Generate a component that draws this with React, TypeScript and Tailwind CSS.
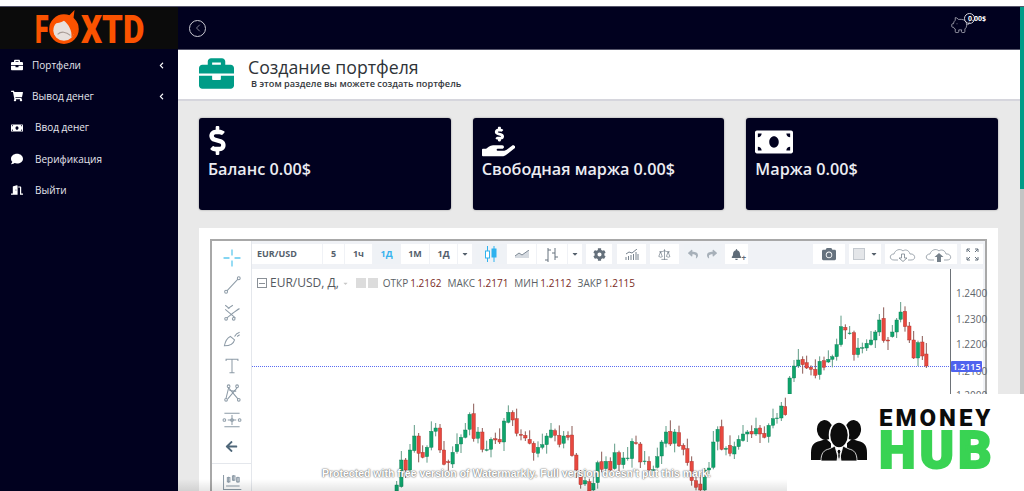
import type { ReactNode } from "react";
import {
  FaBriefcase,
  FaShoppingCart,
  FaMoneyBill,
  FaComment,
  FaDoorOpen,
  FaChevronLeft,
  FaDollarSign,
  FaHandHoldingUsd,
  FaCog,
  FaReply,
  FaShare,
  FaBell,
  FaCamera,
  FaArrowLeft,
  FaCaretDown,
} from "react-icons/fa";
import { ChevronLeft, PiggyBank, Scale } from "lucide-react";

// [x, top, bottom, colour] measured on the 3x crops of the picture
type Candle = [number, number, number, "g" | "r"];

const left: Candle[] = [
  [590, 765, 783, "g"], [604, 690, 770, "g"], [617, 690, 720, "r"], [630, 660, 720, "g"], [643, 618, 662, "g"],
  [656, 618, 670, "r"], [668, 667, 682, "r"], [681, 652, 680, "g"], [694, 604, 652, "g"], [707, 594, 604, "g"],
  [720, 594, 660, "r"], [732, 660, 703, "r"], [745, 695, 698, "r"], [758, 667, 702, "g"], [771, 643, 665, "g"],
  [783, 622, 642, "g"], [796, 600, 622, "g"], [809, 553, 598, "g"], [821, 551, 626, "r"], [834, 606, 625, "g"],
  [847, 606, 658, "r"], [860, 659, 661, "g"], [873, 628, 658, "g"], [886, 626, 630, "r"], [899, 628, 636, "r"],
  [912, 573, 636, "g"], [925, 547, 577, "g"], [938, 547, 570, "r"], [950, 566, 610, "r"], [963, 613, 616, "r"],
  [976, 616, 624, "r"], [989, 628, 640, "r"], [1001, 640, 668, "r"], [1014, 652, 670, "g"], [1027, 644, 652, "g"],
  [1040, 618, 644, "g"], [1053, 600, 622, "g"], [1065, 602, 616, "r"], [1078, 616, 643, "r"], [1091, 618, 640, "g"],
  [1104, 616, 622, "r"], [1116, 615, 677, "r"], [1129, 675, 720, "r"], [1142, 738, 764, "r"], [1155, 752, 762, "g"],
  [1168, 755, 783, "r"], [1180, 760, 780, "g"],
];

const right: Candle[] = [
  [-7, 698, 758, "g"], [5, 695, 718, "r"], [18, 694, 716, "g"], [31, 694, 720, "r"], [44, 668, 716, "g"],
  [57, 668, 704, "r"], [70, 684, 704, "g"], [83, 684, 686, "g"], [96, 634, 686, "g"], [108, 638, 641, "r"],
  [121, 642, 696, "r"], [134, 693, 695, "g"], [147, 694, 720, "r"], [160, 719, 721, "g"], [172, 680, 712, "g"],
  [185, 636, 678, "g"], [198, 606, 640, "g"], [211, 604, 642, "r"], [224, 606, 640, "g"], [237, 608, 648, "r"],
  [250, 646, 658, "r"], [262, 656, 698, "r"], [275, 694, 752, "r"], [288, 752, 772, "r"], [301, 762, 780, "r"],
  [314, 720, 780, "g"], [327, 714, 720, "g"], [340, 636, 712, "g"], [353, 598, 634, "g"], [365, 590, 658, "r"],
  [378, 655, 658, "g"], [390, 646, 670, "r"], [403, 650, 672, "g"], [416, 628, 650, "g"], [429, 612, 632, "g"],
  [442, 606, 612, "g"], [455, 604, 612, "r"], [468, 596, 612, "g"], [480, 594, 612, "r"], [493, 610, 622, "r"],
  [506, 586, 620, "g"], [519, 566, 586, "g"], [531, 564, 566, "g"], [544, 528, 564, "g"], [556, 530, 554, "r"],
  [569, 444, 492, "g"], [582, 408, 444, "g"], [595, 390, 408, "g"], [608, 388, 404, "r"], [620, 398, 414, "r"],
  [633, 412, 418, "r"], [646, 418, 436, "r"], [659, 394, 434, "g"], [672, 392, 412, "r"], [685, 388, 396, "g"],
  [697, 380, 388, "g"], [710, 344, 380, "g"], [723, 290, 344, "g"], [736, 292, 300, "r"], [749, 309, 311, "g"],
  [762, 308, 374, "r"], [774, 354, 374, "g"], [787, 353, 355, "g"], [800, 340, 354, "g"], [813, 330, 344, "g"],
  [826, 306, 330, "g"], [838, 270, 306, "g"], [851, 265, 332, "r"], [864, 330, 333, "r"], [877, 306, 320, "g"],
  [890, 270, 306, "g"], [902, 246, 268, "g"], [915, 244, 290, "r"], [928, 288, 330, "r"], [941, 330, 384, "r"],
  [954, 338, 384, "g"], [967, 336, 378, "r"], [979, 372, 408, "r"],
];

const wickUp = [4, 9, 2, 6, 11, 3, 7, 2, 10, 5];
const wickDown = [3, 1, 8, 4, 2, 9, 1, 6, 3, 5];

const candles = [
  ...left.map(([x, t, b, c]) => ({ x: 200 + x / 3, t: 230 + t / 3, b: 230 + b / 3, c })),
  ...right.map(([x, t, b, c]) => ({ x: 600 + x / 3, t: 230 + t / 3, b: 230 + b / 3, c })),
];

function Chart() {
  return (
    <svg className="absolute left-0 top-0" width="698" height="222" viewBox="252 269 698 222">
      <line x1="252" y1="366.5" x2="950" y2="366.5" stroke="#5a6cf2" strokeWidth="1" strokeDasharray="1 1" />
      {candles.map((k, i) => (
        <g key={i}>
          <line
            x1={k.x}
            x2={k.x}
            y1={k.t - wickUp[i % 10]}
            y2={k.b + wickDown[i % 10]}
            stroke={k.c === "g" ? "#5f9c86" : "#8b5a55"}
            strokeWidth="1"
          />
          <rect
            x={k.x - 1.7}
            y={k.t}
            width="3.4"
            height={k.b - k.t}
            fill={k.c === "g" ? "#0fa46c" : "#e8483f"}
            stroke={k.c === "g" ? "#0a7a50" : "#a8302a"}
            strokeWidth="0.4"
          />
        </g>
      ))}
    </svg>
  );
}

function NavItem({ icon, label, pad, arrow }: { icon: ReactNode; label: string; pad: string; arrow?: boolean }) {
  return (
    <div className="flex h-[31.3px] items-center pl-[10px] pr-[13px] text-[10px] font-medium text-[#e6e6ee]">
      <span className={`flex w-[14px] justify-center text-[12px] text-white ${pad}`}>{icon}</span>
      <span className="flex-1">{label}</span>
      {arrow && <FaChevronLeft className="text-[7px] text-white" />}
    </div>
  );
}

function StatCard({ icon, text }: { icon: ReactNode; text: string }) {
  return (
    <div className="h-[92px] rounded-[3px] bg-[#01011f] pl-[9px] pt-[7px] text-white shadow-[0_0_2px_rgba(0,0,0,0.4)]">
      <div className="flex h-[30px] items-center">{icon}</div>
      <div className="mt-[2px] text-[16.2px] font-semibold text-[#ececf2]">{text}</div>
    </div>
  );
}

function ToolBtn({ w, active, children }: { w: string; active?: boolean; children: ReactNode }) {
  return (
    <div
      className={`flex h-[20px] shrink-0 items-center justify-center text-[9px] font-bold ${w} ${
        active ? "bg-[#eff2f6]" : "bg-white"
      }`}
    >
      {children}
    </div>
  );
}

function Stroke({ children, color = "#8c9aa6" }: { children: ReactNode; color?: string }) {
  return (
    <svg width="22" height="22" viewBox="0 0 26 26" fill="none" stroke={color} strokeWidth="1.2">
      {children}
    </svg>
  );
}

function SideTools() {
  return (
    <div className="flex w-[39px] shrink-0 flex-col items-center bg-white pt-[3px]">
      <div className="flex h-[27px] items-center">
        <Stroke color="#5cc8ee">
          <path d="M13 3v7M13 16v7M3 13h7M16 13h7" strokeWidth="1.5" />
        </Stroke>
      </div>
      <div className="flex h-[27px] items-center">
        <Stroke>
          <circle cx="6" cy="21" r="1.7" />
          <circle cx="21" cy="5" r="1.7" />
          <path d="M7 20 20 6" />
        </Stroke>
      </div>
      <div className="flex h-[27px] items-center">
        <Stroke>
          <circle cx="6" cy="21" r="1.6" />
          <circle cx="15" cy="21" r="1.6" />
          <path d="M7 20 21 9M5 10l12 10M5 5l5 4M13 15l9-6M8 9l6-4" />
        </Stroke>
      </div>
      <div className="flex h-[27px] items-center">
        <Stroke>
          <path d="M4 21c1-5 3-9 7-11l5 4c-1 4-5 7-12 7ZM16 10c1-2 3-4 6-5M19 10l3-2" />
        </Stroke>
      </div>
      <div className="flex h-[27px] items-center">
        <Stroke>
          <path d="M6 7V5h14v2M13 5v16M10 21h6" />
        </Stroke>
      </div>
      <div className="flex h-[27px] items-center">
        <Stroke>
          <circle cx="6" cy="21" r="1.6" />
          <circle cx="9" cy="5" r="1.6" />
          <circle cx="19" cy="5" r="1.6" />
          <circle cx="21" cy="21" r="1.6" />
          <path d="M6 19 9 7M9 7l11 13M19 7 8 20M10 10l8 1" />
        </Stroke>
      </div>
      <div className="flex h-[27px] items-center">
        <Stroke>
          <path d="M4 5h18M8 13h10M4 21h18M13 7v12" />
          <circle cx="4" cy="13" r="1.6" />
          <circle cx="22" cy="13" r="1.6" />
          <circle cx="13" cy="13" r="1.6" />
        </Stroke>
      </div>
      <div className="flex h-[27px] items-center text-[13px] text-[#4f6779]">
        <FaArrowLeft />
      </div>
      <div className="mt-[3px] h-px w-full bg-[#e4e7ec]" />
      <div className="mt-[3px] flex h-[27px] items-center">
        <Stroke>
          <path d="M3 6v17h21M6 19h16M9 8v7M15 6v7M20 8v7" />
          <rect x="7.5" y="9" width="3" height="5" />
          <rect x="13.5" y="7" width="3" height="5" />
          <rect x="18.5" y="9" width="3" height="5" />
        </Stroke>
      </div>
    </div>
  );
}

function CloudIcon({ arrow, filled }: { arrow: string; filled?: boolean }) {
  return (
    <svg width="28" height="15" viewBox="0 0 28 15" fill="none" stroke="#8a949e" strokeWidth="0.8">
      <path d="M9 13H5c-5 0-5-6 0-6 1-4 6-6 9-3 2-2 6-1 7 3 5-1 7 6 1 6h-3" />
      <path d={arrow} fill={filled ? "#76818b" : "#fff"} stroke={filled ? "none" : "#76818b"} />
    </svg>
  );
}

function TopTools() {
  return (
    <div className="flex h-[28px] items-start gap-[4px] bg-[#f0f2f6] pt-[3px] text-[#54606c]">
      <div className="flex gap-px">
        <ToolBtn w="w-[70px] !justify-start pl-[5px]">EUR/USD</ToolBtn>
        <ToolBtn w="w-[21px]">5</ToolBtn>
        <ToolBtn w="w-[27px]">1ч</ToolBtn>
        <ToolBtn w="w-[27px] text-[#38b3ee]" active>1Д</ToolBtn>
        <ToolBtn w="w-[28px]">1М</ToolBtn>
        <ToolBtn w="w-[27px]">1Д</ToolBtn>
        <ToolBtn w="w-[14px]"><FaCaretDown className="text-[8px]" /></ToolBtn>
      </div>
      <div className="flex gap-px">
        <ToolBtn w="w-[30px]" active>
          <svg width="14" height="16" viewBox="0 0 14 16" fill="none" stroke="#2fb2ee">
            <path d="M3.5 0v16M10 0v16" />
            <rect x="1.5" y="5" width="4" height="7" fill="#fff" />
            <rect x="8" y="3" width="4" height="8" fill="#2fb2ee" />
          </svg>
        </ToolBtn>
        <ToolBtn w="w-[29px]">
          <svg width="14" height="8" viewBox="0 0 14 8">
            <path d="M0 8V6l4-3 3 2 7-5v8Z" fill="#d5dae0" />
            <path d="M0 6l4-3 3 2 7-5" fill="none" stroke="#7f8a95" />
          </svg>
        </ToolBtn>
        <ToolBtn w="w-[30px]">
          <svg width="16" height="15" viewBox="0 0 16 15" fill="none" stroke="#66727e">
            <path d="M4 1v14M1 13h3M4 3h3M11 1v12M8 6h3M11 10h3" />
          </svg>
        </ToolBtn>
        <ToolBtn w="w-[14px]"><FaCaretDown className="text-[8px]" /></ToolBtn>
      </div>
      <ToolBtn w="w-[26px]"><FaCog className="text-[13px] text-[#65707b]" /></ToolBtn>
      <ToolBtn w="w-[29px] ml-px">
        <svg width="14" height="11" viewBox="0 0 14 11" fill="none" stroke="#79848f">
          <path d="M1 11V8M3.5 11V7M6 11V6M8.5 11V5M11 11V3M13 11V5M1 5l3-2 3 1 5-4" />
        </svg>
      </ToolBtn>
      <ToolBtn w="w-[29px]"><Scale size={13} strokeWidth={1.2} color="#66727e" /></ToolBtn>
      <div className="ml-px flex gap-px">
        <ToolBtn w="w-[18px]" active><FaReply className="text-[10px] text-[#a7b0b9]" /></ToolBtn>
        <ToolBtn w="w-[18px]" active><FaShare className="text-[10px] text-[#a7b0b9]" /></ToolBtn>
      </div>
      <ToolBtn w="w-[23px]">
        <span className="relative">
          <FaBell className="text-[11px] text-[#5f6c78]" />
          <span className="absolute -bottom-[2px] -right-[4px] text-[8px] leading-none text-[#5f6c78]">+</span>
        </span>
      </ToolBtn>
      <div className="flex-1" />
      <ToolBtn w="w-[32px]"><FaCamera className="text-[14px] text-[#66727e]" /></ToolBtn>
      <ToolBtn w="w-[32px] gap-[5px]">
        <span className="h-[12px] w-[12px] border border-[#c4c9cf] bg-[#e4e6e9]" />
        <FaCaretDown className="text-[8px] text-[#55606b]" />
      </ToolBtn>
      <div className="flex">
        <ToolBtn w="w-[36px]"><CloudIcon arrow="M12.5 7h3v4h2.5l-4 3.5-4-3.5h2.5Z" /></ToolBtn>
        <ToolBtn w="w-[36px]"><CloudIcon arrow="M14 6l4.5 4H16v5h-4v-5H9.5Z" filled /></ToolBtn>
      </div>
      <ToolBtn w="w-[22px] mr-[2px]">
        <svg width="13" height="13" viewBox="0 0 13 13" fill="none" stroke="#66727e">
          <path d="M1 4V1h3M1 1l3 3M9 1h3v3M12 1 9 4M1 9v3h3M1 12l3-3M12 9v3H9M12 12 9 9" />
        </svg>
      </ToolBtn>
    </div>
  );
}

function Ohlc({ name, value }: { name: string; value: string }) {
  return (
    <span className="flex gap-[2px]">
      <span className="text-[#5a5f66]">{name}</span>
      <span className="text-[#7a2b24]">{value}</span>
    </span>
  );
}

function ChartPane() {
  return (
    <div className="flex h-[240px] bg-[#f0f2f6] pr-[2px]">
      <div className="relative flex-1 bg-white">
        <Chart />
        <div className="relative flex h-[28px] items-center pl-[5px] text-[10px] font-medium">
          <span className="flex h-[10px] w-[10px] items-center justify-center border border-[#8a9097]">
            <span className="h-px w-[6px] bg-[#8a9097]" />
          </span>
          <span className="ml-[3px] text-[12px] text-[#55595f]">EUR/USD, Д,</span>
          <FaCaretDown className="ml-[3px] text-[7px] text-[#c8c8c8]" />
          <span className="ml-[7px] h-[10px] w-[10px] bg-[#dcdcdc]" />
          <span className="ml-[2px] h-[10px] w-[10px] bg-[#dcdcdc]" />
          <span className="ml-[5px] flex gap-[6px]">
            <Ohlc name="ОТКР" value="1.2162" />
            <Ohlc name="МАКС" value="1.2171" />
            <Ohlc name="МИН" value="1.2112" />
            <Ohlc name="ЗАКР" value="1.2115" />
          </span>
        </div>
      </div>
      <div className="relative w-[33px] shrink-0 border-l border-[#6d7278] bg-white text-[10px] text-[#5f666d]">
        <span className="absolute left-[5px] top-[17px]">1.2400</span>
        <span className="absolute left-[5px] top-[43px]">1.2300</span>
        <span className="absolute left-[5px] top-[68px]">1.2200</span>
        <span className="absolute left-[5px] top-[95px]">1.2100</span>
        <span className="absolute left-[5px] top-[119px]">1.2000</span>
        <span className="absolute left-0 top-[92px] flex h-[11px] w-[31px] items-center justify-center rounded-[1px] bg-[#4f63ee] text-[9px] font-semibold text-white">
          1.2115
        </span>
      </div>
    </div>
  );
}

function People() {
  return (
    <svg width="56" height="41" viewBox="0 0 56 41" fill="#0c0c0c" className="mt-[3px]">
      <ellipse cx="14" cy="10" rx="8" ry="10" transform="rotate(-10 14 10)" />
      <ellipse cx="42" cy="10" rx="8" ry="10" transform="rotate(10 42 10)" />
      <path d="M0 33c0-8 3-11 9-12l6-2 5 4v17H0ZM56 33c0-8-3-11-9-12l-6-2-5 4v17h20Z" />
      <ellipse cx="28" cy="15" rx="9.5" ry="13" stroke="#fff" strokeWidth="1.5" />
      <path d="M10 41c0-8 3-11 8-12l6-3 4 15 4-15 6 3c5 1 8 4 8 12H30l-1-7 1-3-2-2-2 2 1 3-1 7Z" stroke="#fff" strokeWidth="0.8" />
    </svg>
  );
}

function Logo() {
  return (
    <div className="flex h-[42px] items-center bg-[#0b0b0b] pl-[35px] pt-[3px] font-['Roboto',sans-serif] text-[38px] font-black leading-none text-[#fb5200]">
      <span className="inline-block w-[14px] origin-left scale-x-[0.65]">F</span>
      <svg width="32" height="36" viewBox="0 0 30 34" className="-mt-[6px] shrink-0">
        <circle cx="14" cy="19" r="14" fill="#fb5200" />
        <circle cx="14" cy="20" r="10" fill="#e7e0dc" />
        <path d="M4 14c4-6 10-8 14-7l6-6-1 8c4 6 3 13-2 18 1-7-3-13-7-16-3 2-6 2-10 3Z" fill="#fb5200" />
        <path d="M8 24c3-3 8-3 12 1" stroke="#a89c96" fill="none" />
      </svg>
      <span className="inline-block w-[62px] origin-left scale-x-[0.87] whitespace-nowrap">XTD</span>
    </div>
  );
}

export default function App() {
  return (
    <div className="relative flex h-[491px] w-[1024px] flex-col overflow-hidden bg-white font-['Open_Sans',sans-serif]">
      <div className="h-[6px] shrink-0 bg-white" />
      <div className="flex min-h-0 flex-1 border-t border-[#55556a]">
        <aside className="w-[178px] shrink-0 bg-[#01011f]">
          <Logo />
          <nav className="pt-[0.5px]">
            <NavItem icon={<FaBriefcase />} label="Портфели" pad="mr-[8px]" arrow />
            <NavItem icon={<FaShoppingCart />} label="Вывод денег" pad="mr-[8px]" arrow />
            <NavItem icon={<FaMoneyBill />} label="Ввод денег" pad="mr-[11px]" />
            <NavItem icon={<FaComment />} label="Верификация" pad="mr-[11px]" />
            <NavItem icon={<FaDoorOpen />} label="Выйти" pad="mr-[11px]" />
          </nav>
        </aside>
        <main className="flex min-w-0 flex-1 flex-col">
          <header className="flex h-[43px] shrink-0 items-center justify-between border-b border-[#55556a] bg-[#01011f] pl-[11px] pr-[34px]">
            <span className="flex h-[17px] w-[17px] items-center justify-center rounded-full border border-[#c9c9d2]">
              <ChevronLeft size={12} strokeWidth={1.2} color="#d5d5dd" />
            </span>
            <span className="relative -mt-[6px] flex h-[20px] w-[36px] items-center text-white">
              <PiggyBank size={21} strokeWidth={0.8} color="#c9c9d2" className="-scale-x-100" />
              <span className="absolute left-[14px] -top-[2px] h-[11px] w-[11px] rounded-full border border-[#d5d5dd]" />
              <span className="absolute left-[18px] -top-[1px] text-[7px] font-bold leading-[9px]">0.00$</span>
            </span>
          </header>
          <div className="flex h-[51px] shrink-0 items-center border-b-2 border-[#d6d6dd] bg-white pb-[3px] pl-[21px]">
            <FaBriefcase className="text-[35px] text-[#009c87]" />
            <div className="ml-[14px]">
              <div className="text-[17.7px] font-medium leading-[21px] text-[#2e3338]">Создание портфеля</div>
              <div className="ml-[3px] text-[9.2px] font-semibold leading-[11px] text-[#33373c]">
                В этом разделе вы можете создать портфель
              </div>
            </div>
          </div>
          <div className="flex-1 bg-[#e9e9e9] pl-[21px] pr-[22px] pt-[17px]">
            <div className="grid grid-cols-3 gap-[22px]">
              <StatCard icon={<FaDollarSign className="-ml-[5px] text-[29px]" />} text="Баланс 0.00$" />
              <StatCard icon={<FaHandHoldingUsd className="mt-[2px] text-[33px]" />} text="Свободная маржа 0.00$" />
              <StatCard icon={<FaMoneyBill className="mt-[4px] text-[38px]" />} text="Маржа 0.00$" />
            </div>
            <div className="mt-[18px] h-[300px] bg-white px-[11px] pt-[11px]">
              <div className="flex h-full border-x-2 border-t-2 border-[#a8a8a8]">
                <SideTools />
                <div className="min-w-0 flex-1 border-l border-[#e4e7ec]">
                  <TopTools />
                  <ChartPane />
                </div>
              </div>
            </div>
          </div>
        </main>
        <div className="flex w-[4px] shrink-0 flex-col bg-[#c4c4c4]">
          <div className="h-[182px] bg-[#009c87]" />
        </div>
      </div>
      {/* bottom fade, watermark and badge sit over the picture */}
      <div className="absolute bottom-0 left-[178px] h-[12px] w-[609px] bg-linear-to-b from-transparent to-black/10" />
      <div className="absolute left-[322px] top-[466px] whitespace-nowrap font-['Liberation_Sans',sans-serif] text-[10.5px] font-bold text-white [text-shadow:0_0_1px_#666,0_0_2px_#666]">
        Protected with free version of Watermarkly. Full version doesn't put this mark.
      </div>
      <div className="absolute bottom-0 right-0 flex h-[97px] w-[237px] items-center bg-white pb-[7px] pl-[24px]">
        <People />
        <div className="ml-[12px] w-[113px] font-['Roboto',sans-serif] font-black">
          <div className="h-[24px] text-[24px] leading-[24px] tracking-[3px] text-[#0c0c0c]">EMONEY</div>
          <div className="h-[42px] text-[52px] leading-[42px] tracking-[4px] text-[#39d353] [-webkit-text-stroke:2px_#39d353]">HUB</div>
        </div>
      </div>
    </div>
  );
}
